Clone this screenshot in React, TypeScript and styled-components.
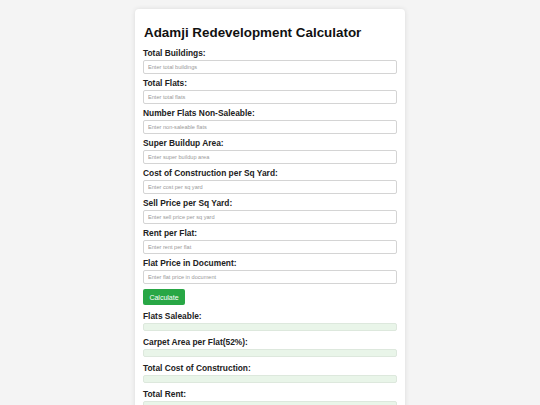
import React from 'react';
import styled, { createGlobalStyle } from 'styled-components';

const GlobalStyle = createGlobalStyle`
  html, body {
    margin: 0;
    padding: 0;
    background: #f4f4f4;
    font-family: "Liberation Sans", Arial, sans-serif;
  }
`;

const Page = styled.div`
  display: flex;
  justify-content: center;
  padding-top: 9px;
`;

const Card = styled.div`
  width: 254px;
  background: #fff;
  padding: 6px 8px 10px;
  border-radius: 4px;
  box-shadow: 0 0 5px rgba(0, 0, 0, 0.1);
`;

const Title = styled.h1`
  margin: 8px 0 6px 1px;
  font-size: 13.4px;
  line-height: 20px;
  white-space: nowrap;
  font-weight: bold;
  color: #111;
`;

const Field = styled.div`
  display: flex;
  flex-direction: column;
  margin-bottom: 5px;
`;

const Label = styled.label`
  display: block;
  font-size: 8.4px;
  line-height: 8px;
  font-weight: bold;
  color: #222;
  margin-bottom: 3px;
`;

const Input = styled.input`
  box-sizing: border-box;
  width: 100%;
  height: 14px;
  padding: 0 4px;
  border: 1px solid #d4d4d4;
  border-radius: 2px;
  font-family: "Liberation Sans", Arial, sans-serif;
  font-size: 5.6px;
  outline: none;
  &::placeholder {
    color: #999;
  }
`;

const Button = styled.button`
  display: block;
  margin: 1px 0 7px;
  height: 16px;
  width: 42px;
  padding: 0;
  border: none;
  border-radius: 2px;
  background: #28a745;
  color: #fff;
  font-family: "Liberation Sans", Arial, sans-serif;
  font-size: 7px;
`;

const Result = styled.div`
  display: flex;
  flex-direction: column;
  margin-bottom: 7px;
`;

const ResultBox = styled.div`
  box-sizing: border-box;
  height: 8px;
  background: #e9f5e9;
  border: 1px solid #dde8dd;
  border-radius: 2px;
`;

const fields = [
  ['Total Buildings:', 'Enter total buildings'],
  ['Total Flats:', 'Enter total flats'],
  ['Number Flats Non-Saleable:', 'Enter non-saleable flats'],
  ['Super Buildup Area:', 'Enter super buildup area'],
  ['Cost of Construction per Sq Yard:', 'Enter cost per sq yard'],
  ['Sell Price per Sq Yard:', 'Enter sell price per sq yard'],
  ['Rent per Flat:', 'Enter rent per flat'],
  ['Flat Price in Document:', 'Enter flat price in document'],
];

const results = [
  'Flats Saleable:',
  'Carpet Area per Flat(52%):',
  'Total Cost of Construction:',
  'Total Rent:',
];

const App: React.FC = () => {
  return (
    <>
      <GlobalStyle />
      <Page>
        <Card>
          <Title>Adamji Redevelopment Calculator</Title>
          {fields.map(([label, ph]) => (
            <Field key={label}>
              <Label>{label}</Label>
              <Input type="number" placeholder={ph} />
            </Field>
          ))}
          <Button>Calculate</Button>
          {results.map((r) => (
            <Result key={r}>
              <Label>{r}</Label>
              <ResultBox />
            </Result>
          ))}
        </Card>
      </Page>
    </>
  );
};

export default App;
